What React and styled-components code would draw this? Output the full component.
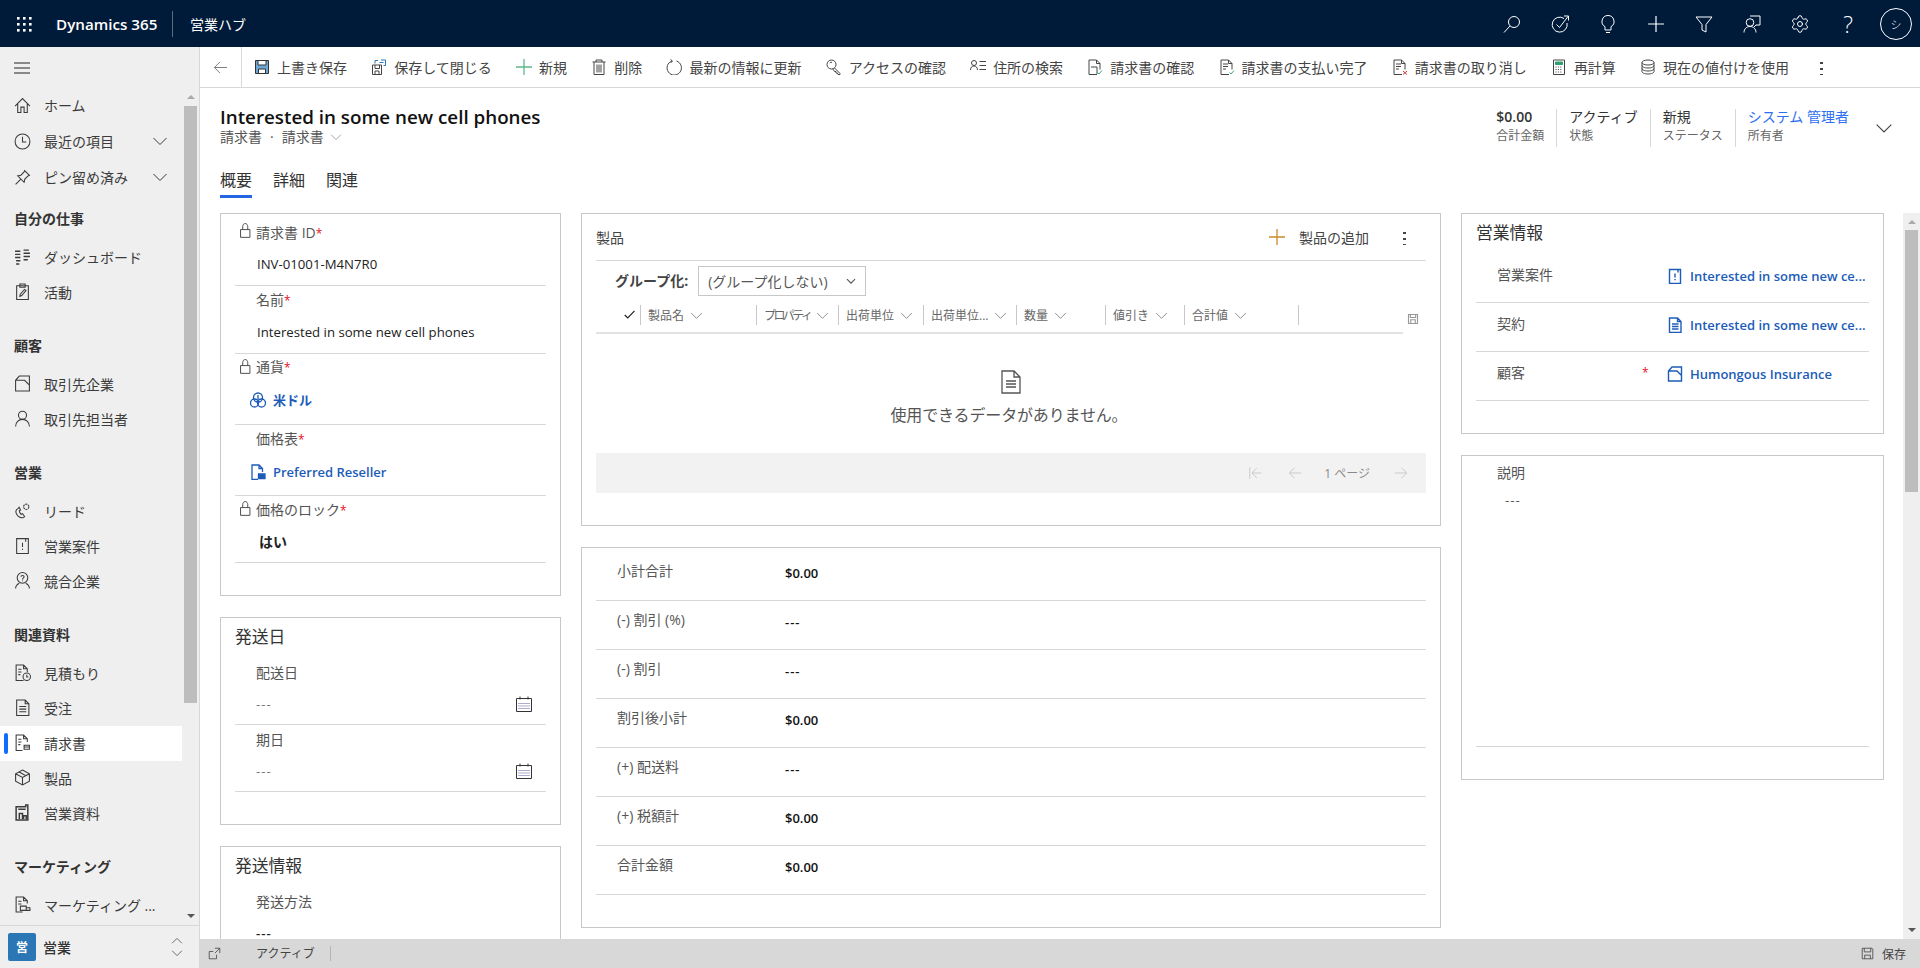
import React from "react";
import styled, { createGlobalStyle } from "styled-components";
import { Settings } from "lucide-react";

const Global = createGlobalStyle`
  html, body { margin: 0; padding: 0; height: 100%; overflow: hidden; }
  body {
    font-family: "Open Sans", "Noto Sans CJK JP", sans-serif;
    font-size: 14px;
    color: #333;
    background: #fff;
  }
  * { box-sizing: border-box; }
`;

const paths = {
  home: <path d="M1 8.500 8 1.500l7 7M3.500 6.500v8h3v-5h3v5h3v-8" />,
  clock: <><circle cx="8" cy="8" r="7" /><path d="M8 3.500v5h3.500" /></>,
  pin: <path d="M10 1.500 14.500 6l-1.300.5-3 3-.7 3-6-6 3-.7 3-3ZM6.200 9.800 1.500 14.500" />,
  dash: <path strokeWidth="1.400" d="M1 3h5M1 6h5M1 9h5M2 12h4M2 15h3M9 2h5M9 5h6M9 8h6M9 11h4" />,
  activity: <path d="M2.500 2.500h11v13h-11ZM5.500 4V1h5v3ZM5.500 12.500l.4-2 4-4.500 1.400 1.200-4 4.600Z" />,
  account: <path d="M1.500 15V5L5 1h9.500v14ZM1.500 5h8.500l4.500 4.500" />,
  contact: <><circle cx="8" cy="5" r="3.800" /><path d="M1.500 15.500c0-4 2.800-6.700 6.500-6.700s6.500 2.700 6.500 6.700" /></>,
  lead: <><circle cx="11.500" cy="4.500" r="2.500" strokeDasharray="2 .6" /><path d="M4 6C2 7 1 9 2.500 11.500S7 15.500 9 14.500l1-.8-2-2.700-1.300.6C5.800 10.800 5 9.500 5 8.300l1.200-.8L4.800 5Z" /></>,
  opp: <path d="M2.500 1.500h11v14h-11ZM11 1.500v3M8 5.500v4M8 11v1.200" />,
  comp: <><circle cx="8" cy="5.500" r="5" /><path d="M6.500 4.500C6.500 2.800 9.500 2.800 9.500 4.500 9.500 5.700 8 5.700 8 7M8 8v.8M1.500 15.500c0-2.500 1.500-4 3.500-5M14.500 15.500c0-2.500-1.500-4-3.500-5" /></>,
  quote: <><path d="M9 15.500H2V1h7l3.500 3.500v3M9 1v3.500h3.500M4 5h3M4 7.500h3M4 10h2" /><circle cx="12" cy="12" r="3.500" /><path d="M12 10v2.200h1.500" /></>,
  order: <path d="M2.500 1h8l3.500 3.500v11H2.500ZM10.500 1v3.500H14M5 7h6.500M5 9.500h6.500M5 12h6.500" />,
  invoice: <><path d="M8 15.500H2V1h7l3.500 3.500v3M9 1v3.500h3.500M4 5h3M4 7.500h3M4 10h2" /><path d="M9.500 10.500h5v1.800h-5ZM9.500 12.300h5v2h-5Z" /></>,
  product: <path d="M8 1 14.500 4.500v7L8 15l-6.500-3.500v-7ZM1.500 4.500 8 8l6.500-3.500M8 8v7M4.800 2.800l6.500 3.500" />,
  lit: <path strokeWidth="1.400" d="M2 2.500h9V1h2v14H2ZM4 5h7M5 14V9h3v5M9 14v-3h2.500v3" />,
  mkt: <><path d="M8 15H2V1h7l3.500 3.500V7M9 1v3.500h3.500M4 5h3M4 7.500h3" /><path d="M6 9.500h5.500v4H6ZM11.500 11H15v2.500h-3.500M8 15.200h.1M13 15.200h.1" /></>,
  lock: <path d="M2.700 7h10v8.300h-10ZM5 7V4C5 1.800 6.200.6 7.700.6S10.400 1.800 10.400 4v3" />,
  back: <path d="M15 8H1.500M7.500 2 1.500 8l6 6" />,
  fwd: <path d="M1 8h13.500M8.500 2l6 6-6 6" />,
  first: <path d="M2 1.500v13M15 8H4.500M10 2.500 4.500 8l5.500 5.500" />,
  chev: <path d="M1.500 5 8 11.500 14.500 5" />,
  chevUp: <path d="M1.500 11 8 4.500 14.500 11" />,
  closeSave: <><path d="M1.500 6h9v9.500h-9ZM4 6v3.500h4.500V6M4 15.500V12h4v3.500" /><path stroke="#2b76b4" d="M7 1.500H4v3M10 1h4.500v5.500h-2M8.500 3.500h4" /></>,
  trash: <path d="M1.500 3h13M5 3V1h6v2M3 3v12.500h10V3M6 5.500v8M8 5.500v8M10 5.500v8" />,
  refresh: <path d="M4.500.5 6.500 2 4.500 4M6 2a7.200 7.200 0 1 0 4.500 0" />,
  key: <><circle cx="5.500" cy="5.500" r="4.500" /><path d="M3.800 3.800a2 2 0 0 1 2.200-.4M8.500 9l5.500 5.500v1h-2l-.5-1.500h-1.500v-1.500H8.500L6.800 10" /></>,
  addr: <><circle cx="4" cy="4" r="2.500" /><path d="M.5 11c0-2.500 1.500-4 3.500-4s3.500 1.500 3.500 4M9.500 2.500H16M9.500 6.500H16M9.500 10.500H16" /></>,
  check: <path d="M1 8l4 4 9-9.500" />,
  db: <><ellipse cx="8" cy="3.500" rx="6" ry="2.500" /><path d="M2 3.500v9c0 1.400 2.700 2.500 6 2.500s6-1.100 6-2.500v-9M2 6.500C2 8 4.700 9 8 9s6-1 6-2.500M2 9.500c0 1.500 2.700 2.500 6 2.500s6-1 6-2.500" /></>,
  cal: <><path d="M.5 2.500h15v13H.5ZM4 .5v3M12 .5v3" /><path strokeDasharray="1 1" d="M2.500 7.500h11M2.500 10h11M2.500 12.500h11" stroke="#5a5a9a" /></>,
  gridSave: <path strokeWidth="1.500" d="M2 2h12v12H2ZM4.500 2v4h7V2M5 14v-5h6v5" />,
  menu: <path d="M0 3h16M0 8h16M0 13h16" />,
  expand: <path d="M1.500 5.500v9h9M1.500 5.500h5M10.500 14.500v-5M8.500 1.500h6v6M14.500 1.500l-6 6" />,
  save: <path d="M1.500 1.500h12l1 1v12h-13ZM4 1.500V6h8V1.500M4.500 14.500V10h7v4.500" />,
};

const Glyph = styled.svg`
  width: ${(p) => p.$size || 16}px;
  height: ${(p) => p.$size || 16}px;
  flex: none;
  fill: none;
  stroke: ${(p) => p.$color || "currentColor"};
  stroke-width: ${(p) => p.$weight || 1};
  display: block;
`;

const Ico = ({ name, size, color, weight }) => (
  <Glyph viewBox="0 0 16 16" $size={size} $color={color} $weight={weight}>
    {paths[name]}
  </Glyph>
);

/* top bar */
const TopBar = styled.header`
  height: 47px;
  background: #001a39;
  color: #fff;
  display: flex;
  align-items: center;
`;
const Waffle = styled.div`
  width: 56px;
  padding-left: 16px;
  flex: none;
`;
const Brand = styled.div`
  font-size: 15.2px;
  font-weight: 600;
  width: 117px;
  height: 26px;
  line-height: 26px;
  border-right: 1px solid #5a6b82;
  flex: none;
`;
const AppName = styled.div`
  font-size: 14px;
  margin-left: 17px;
`;
const TopIcons = styled.div`
  margin-left: auto;
  display: flex;
  align-items: center;
`;
const TopBtn = styled.div`
  width: 48px;
  height: 47px;
  display: flex;
  align-items: center;
  justify-content: center;
  font-size: 23px;
  font-weight: 300;
`;
const Avatar = styled.div`
  width: 32px;
  height: 32px;
  border-radius: 50%;
  border: 1px solid #fff;
  font-size: 11px;
  display: flex;
  align-items: center;
  justify-content: center;
`;

/* sidebar */
const Shell = styled.div`
  height: 921px;
  display: flex;
`;
const Sidebar = styled.aside`
  width: 200px;
  flex: none;
  background: #efefef;
  border-right: 1px solid #d8d8d8;
  display: flex;
  flex-direction: column;
`;
const Burger = styled.div`
  height: 41px;
  padding-left: 14px;
  display: flex;
  align-items: center;
  color: #222;
`;
const NavWrap = styled.div`
  flex: 1;
  min-height: 0;
  display: flex;
`;
const NavList = styled.nav`
  width: 182px;
  overflow: hidden;
`;
const NavHead = styled.div`
  height: 42px;
  margin-top: ${(p) => p.$top ?? 15}px;
  padding-left: 14px;
  line-height: 41px;
  font-weight: 700;
  color: #333;
  font-size: 14px;
`;
const NavRow = styled.div`
  position: relative;
  height: ${(p) => p.$h || 35}px;
  display: flex;
  align-items: center;
  padding: 0 14px 2px;
  gap: 13px;
  color: #3b3b3b;
  background: ${(p) => (p.$active ? "#fff" : "transparent")};
  white-space: nowrap;
  ${(p) =>
    p.$active &&
    `&::before {
      content: "";
      position: absolute;
      left: 4px;
      top: 7px;
      width: 4px;
      height: 21px;
      border-radius: 2px;
      background: #0f6cff;
    }`}
`;
const NavChevron = styled.span`
  margin-left: auto;
`;
const Track = styled.div`
  width: ${(p) => p.$w}px;
  margin-left: ${(p) => p.$ml || 0}px;
  background: ${(p) => p.$bg || "transparent"};
  flex: none;
  display: flex;
  flex-direction: column;
  align-items: center;
`;
const Arrow = styled.div`
  height: ${(p) => p.$h}px;
  flex: none;
  display: flex;
  align-items: center;
  &::after {
    content: "";
    border-left: 4px solid transparent;
    border-right: 4px solid transparent;
    ${(p) => (p.$down ? "border-top: 4px solid #555;" : "border-bottom: 4px solid #aaa;")}
  }
`;
const Thumb = styled.div`
  width: 13px;
  height: ${(p) => p.$h}px;
  background: #bdbdbd;
  flex: none;
  margin-bottom: auto;
`;
const Switcher = styled.div`
  height: 43px;
  border-top: 1px solid #d8d8d8;
  display: flex;
  align-items: center;
  padding-left: 8px;
  color: #333;
`;
const Tile = styled.div`
  width: 28px;
  height: 28px;
  border-radius: 2px;
  background: #2b76b4;
  color: #fff;
  font-size: 12px;
  font-weight: 700;
  display: flex;
  align-items: center;
  justify-content: center;
`;
const SwitchName = styled.div`
  margin-left: 7px;
  font-weight: 500;
`;
const UpDown = styled.div`
  margin-left: auto;
  margin-right: 16px;
  display: flex;
  flex-direction: column;
  gap: 0;
  color: #444;
`;

/* main */
const Main = styled.main`
  flex: 1;
  min-width: 0;
  display: flex;
  flex-direction: column;
`;
const Toolbar = styled.div`
  height: 41px;
  flex: none;
  border-bottom: 1px solid #d8d8d8;
  display: flex;
  align-items: stretch;
  white-space: nowrap;
  color: #444;
`;
const BackBtn = styled.div`
  width: 42px;
  border-right: 1px solid #d8d8d8;
  display: flex;
  align-items: center;
  justify-content: center;
  color: #777;
`;
const Cmd = styled.div`
  display: flex;
  align-items: center;
  gap: 7px;
  padding: 0 12.1px;
`;
const More = styled.div`
  width: 3px;
  height: 15px;
  margin-left: 19px;
  align-self: center;
  background: radial-gradient(circle at center, #444 1.2px, transparent 1.4px) 0 0 / 3px 6px;
`;
const FormHead = styled.div`
  flex: none;
  height: 125px;
  display: flex;
  justify-content: space-between;
  padding: 17px 28px 0 20px;
`;
const Title = styled.h1`
  margin: 0;
  font-size: 18.8px;
  line-height: 24px;
  font-weight: 600;
  color: #111;
`;
const Crumb = styled.div`
  display: flex;
  align-items: center;
  gap: 6px;
  font-size: 14px;
  line-height: 16px;
  color: #555;
`;
const CrumbDot = styled.span`
  margin: 0 2px;
`;
const Tabs = styled.div`
  display: flex;
  gap: 21px;
  margin-top: 25px;
`;
const Tab = styled.div`
  font-size: 16px;
  line-height: 20px;
  height: 28px;
  padding-bottom: 5px;
  color: #333;
  border-bottom: 3px solid ${(p) => (p.$on ? "#2266e3" : "transparent")};
`;
const Meta = styled.div`
  display: flex;
  align-items: flex-start;
  padding-top: 4px;
`;
const MetaItem = styled.div`
  height: 38px;
  padding: 0 12px;
  border-left: ${(p) => (p.$first ? "none" : "1px solid #d8d8d8")};
`;
const MetaValue = styled.div`
  font-size: 14px;
  line-height: 16px;
  font-weight: ${(p) => (p.$bold ? 600 : 400)};
  color: ${(p) => p.$color || "#333"};
`;
const MetaLabel = styled.div`
  font-size: 12px;
  line-height: 21px;
  color: #666;
`;
const MetaChevron = styled.div`
  margin: 10px -1px 0 14px;
  color: #444;
`;
const Body = styled.div`
  flex: 1;
  min-height: 0;
  display: flex;
  overflow: hidden;
`;
const Columns = styled.div`
  flex: 1;
  min-width: 0;
  padding-left: 20px;
  display: grid;
  grid-template-columns: 341px 860px 423px;
  column-gap: 20px;
  align-items: start;
`;
const Col = styled.div`
  display: flex;
  flex-direction: column;
  gap: 21px;
`;
const Card = styled.section`
  flex: none;
  height: ${(p) => p.$h}px;
  border: 1px solid #c8c8c8;
  padding: 0 14px;
  background: #fff;
`;
const CardTitle = styled.h2`
  margin: 0;
  font-size: 16.8px;
  font-weight: 400;
  height: ${(p) => p.$h || 39}px;
  line-height: ${(p) => (p.$h || 39) - 2}px;
  color: #333;
`;
const Field = styled.div`
  position: relative;
  height: ${(p) => p.$h}px;
  padding: ${(p) => p.$top ?? 5}px 0 0 21px;
  border-bottom: ${(p) => (p.$open ? "none" : "1px solid #d8d8d8")};
`;
const LockMark = styled.span`
  position: absolute;
  left: 3px;
  top: 5px;
  color: #444;
`;
const Label = styled.div`
  line-height: 20px;
  color: #555;
`;
const Req = styled.span`
  color: #e81123;
  font-size: 12px;
`;
const Value = styled.div`
  margin-top: ${(p) => p.$gap ?? 10}px;
  line-height: 20px;
  color: ${(p) => p.$color || "#222"};
  font-weight: ${(p) => p.$weight || 400};
  font-size: ${(p) => p.$fs || 13.2}px;
  letter-spacing: ${(p) => (p.$dash ? "1px" : "0")};
  display: flex;
  align-items: center;
  justify-content: space-between;
  padding-left: ${(p) => p.$pl ?? 1}px;
`;
const LinkValue = styled.div`
  margin: ${(p) => p.$gap ?? 12}px 0 0 -6px;
  line-height: 20px;
  display: flex;
  align-items: center;
  gap: 7px;
  color: #1c5cb8;
  font-weight: 600;
  font-size: 13px;
  white-space: nowrap;
`;
const CalBtn = styled.span`
  margin-right: 14px;
  color: #333;
`;
const CardPadded = styled.div`
  padding-top: 4px;
`;

/* products grid */
const GridTitle = styled.div`
  height: 47px;
  display: flex;
  align-items: center;
  border-bottom: 1px solid #d8d8d8;
  color: #444;
`;
const AddBtn = styled.div`
  margin-left: auto;
  display: flex;
  align-items: center;
  gap: 14px;
`;
const Dots = styled(More)`
  margin: 0 20px 0 20px;
`;
const GroupRow = styled.div`
  height: 39px;
  padding-left: 19px;
  display: flex;
  align-items: center;
  gap: 10px;
`;
const GroupLabel = styled.div`
  font-weight: 700;
  color: #444;
  margin-top: -2px;
`;
const Select = styled.div`
  width: 168px;
  height: 30px;
  border: 1px solid #c8c8c8;
  padding: 0 9px 0 9px;
  display: flex;
  align-items: center;
  justify-content: space-between;
  color: #555;
`;
const HeadWrap = styled.div`
  display: flex;
`;
const GridHead = styled.div`
  width: 807px;
  flex: none;
  display: flex;
  padding: 5px 0 7px;
  border-bottom: 2px solid #e2e2e2;
`;
const CheckCell = styled.div`
  width: 44px;
  display: flex;
  align-items: center;
  justify-content: flex-end;
  padding-right: 4px;
  color: #222;
`;
const HeadCell = styled.div`
  width: ${(p) => p.$w}px;
  height: 20px;
  border-left: 1px solid #c8c8c8;
  padding: 0 9px 0 7px;
  display: flex;
  align-items: center;
  justify-content: ${(p) => (p.$spread ? "space-between" : "flex-start")};
  gap: 6px;
  font-size: 12px;
  letter-spacing: ${(p) => (p.$tight ? "-2.6px" : "0")};
  color: #666;
  white-space: nowrap;
`;
const ColSave = styled.div`
  margin: 13px 0 0 4px;
  color: #999;
`;
const Empty = styled.div`
  height: 119px;
  padding-top: 36px;
  display: flex;
  flex-direction: column;
  align-items: center;
  color: #555;
`;
const EmptyText = styled.div`
  margin: 10px 4px 0 0;
  font-size: 16px;
  line-height: 22px;
  letter-spacing: -0.15px;
`;
const Pager = styled.div`
  height: 40px;
  background: #f2f2f2;
  display: flex;
  align-items: center;
  justify-content: flex-end;
  padding-right: 18px;
  color: #c4c4c4;
`;
const PageNum = styled.span`
  font-size: 12px;
  color: #8a8a8a;
  margin: 0 24px 0 22px;
`;
const PagerGap = styled.span`
  width: 26px;
`;

/* summary */
const SumRows = styled.div`
  padding-top: 4px;
`;
const SumRow = styled.div`
  height: 49px;
  border-bottom: 1px solid #d8d8d8;
  display: flex;
  padding-left: 21px;
`;
const SumLabel = styled.div`
  width: 168px;
  padding-top: 9px;
  line-height: 20px;
  color: #555;
`;
const SumValue = styled.div`
  padding-top: 11px;
  line-height: 20px;
  font-size: 13px;
  font-weight: 600;
  letter-spacing: ${(p) => (p.$dash ? "1px" : "0")};
  color: #111;
`;

/* right side */
const InfoRow = styled.div`
  height: 49px;
  border-bottom: 1px solid #d8d8d8;
  display: flex;
  align-items: center;
  padding: 0 0 7px 21px;
  white-space: nowrap;
`;
const InfoLabel = styled.div`
  width: 145px;
  margin-top: -2px;
  color: #555;
`;
const InfoReq = styled.div`
  width: 25px;
  color: #e81123;
  font-size: 12px;
`;
const InfoValue = styled.div`
  display: flex;
  align-items: center;
  gap: 7px;
  margin-top: 2px;
  color: #1c5cb8;
  font-weight: 600;
  font-size: 13px;
`;
const NoteBlock = styled.div`
  height: 291px;
  padding: 7px 0 0 21px;
  border-bottom: 1px solid #d8d8d8;
`;

/* status bar */
const Status = styled.footer`
  height: 29px;
  flex: none;
  background: #d8d8d8;
  display: flex;
  align-items: center;
  font-size: 12px;
  color: #444;
  padding: 0 14px 0 8px;
`;
const StatusText = styled.div`
  margin-left: 35px;
  padding-right: 15px;
  height: 15px;
  line-height: 15px;
  border-right: 1px solid #b4b4b4;
`;
const StatusSave = styled.div`
  margin-left: auto;
  display: flex;
  align-items: center;
  gap: 8px;
`;

const nav = [
  { head: "自分の仕事", top: 2, rows: [["dash", "ダッシュボード"], ["activity", "活動"]] },
  { head: "顧客", rows: [["account", "取引先企業"], ["contact", "取引先担当者"]] },
  { head: "営業", rows: [["lead", "リード"], ["opp", "営業案件"], ["comp", "競合企業"]] },
  {
    head: "関連資料",
    rows: [["quote", "見積もり"], ["order", "受注"], ["invoice", "請求書", true], ["product", "製品"], ["lit", "営業資料"]],
  },
  { head: "マーケティング", rows: [["mkt", "マーケティング ..."]] },
];

const commands = [
  ["save", "上書き保存", "#2b6ea8"],
  ["closeSave", "保存して閉じる"],
  ["plus", "新規", "#5fb88a"],
  ["trash", "削除"],
  ["refresh", "最新の情報に更新"],
  ["key", "アクセスの確認"],
  ["addr", "住所の検索"],
  ["docBox", "請求書の確認"],
  ["docOk", "請求書の支払い完了"],
  ["docX", "請求書の取り消し"],
  ["calc", "再計算"],
  ["db", "現在の値付けを使用"],
];

const columns = [
  ["製品名", 116],
  ["プロパティ", 82, false, true],
  ["出荷単位", 85],
  ["出荷単位...", 93, true],
  ["数量", 89],
  ["値引き", 79],
  ["合計値", 114],
];

const summary = [
  ["小計合計", "$0.00"],
  ["(-) 割引 (%)", "---"],
  ["(-) 割引", "---"],
  ["割引後小計", "$0.00"],
  ["(+) 配送料", "---"],
  ["(+) 税額計", "$0.00"],
  ["合計金額", "$0.00"],
];

const Calc = () => (
  <Glyph viewBox="0 0 16 16">
    <path d="M2.500 1h11v14.500h-11Z" />
    <path d="M4.500 3h7v2.500h-7Z" fill="#2f9e6e" stroke="#2f9e6e" />
    <path strokeDasharray="1 1.400" d="M4.500 8h7M4.500 10.500h7M4.500 13h7" />
  </Glyph>
);

const Plus = ({ color, size = 16 }) => (
  <Glyph viewBox="0 0 16 16" $size={size} $color={color} $weight={1.300}>
    <path d="M8 0v16M0 8h16" />
  </Glyph>
);

const DocStatus = ({ kind }) => (
  <Glyph viewBox="0 0 16 16">
    <path d="M10 15.500H2V1h7.500L13 4.500v6M9.500 1v3.500H13" />
    {kind === "box" ? <path d="M4 8h6v7" /> : <path d="M4 5h5M4 7.500h5M4 10h3" />}
    {kind === "x" ? (
      <path stroke="#d13438" d="M11 12l4 3.500M15 12l-4 3.500" />
    ) : (
      <path stroke="#3aa76d" d="M10.500 13.500l1.500 1.500 3-3.500" />
    )}
  </Glyph>
);

const SaveIcon = () => (
  <Glyph viewBox="0 0 16 16" $color="#333">
    <path d="M1.500 1.500h13v13h-13Z" fill="#6ea6d6" />
    <path d="M4 1.500V6h8V1.500Z" fill="#fff" />
    <path d="M4.500 14.500V10h7v4.500Z" fill="#fff" />
  </Glyph>
);

const cmdIcon = ([name, , color]) => {
  if (name === "save") return <SaveIcon />;
  if (name === "plus") return <Plus color={color} />;
  if (name === "calc") return <Calc />;
  if (name === "docBox") return <DocStatus kind="box" />;
  if (name === "docOk") return <DocStatus />;
  if (name === "docX") return <DocStatus kind="x" />;
  return <Ico name={name} />;
};

const TopIconSet = () => (
  <TopIcons>
    <TopBtn>
      <Glyph viewBox="0 0 20 20" $size={20}>
        <circle cx="12" cy="8" r="5.500" />
        <path d="M8 12 2 18.500" />
      </Glyph>
    </TopBtn>
    <TopBtn>
      <Glyph viewBox="0 0 20 20" $size={20}>
        <path d="M14 4.500A7.500 7.500 0 1 0 17 9M6.500 10.500l3 3L18 2.500M14 2h4.500v4.500" />
      </Glyph>
    </TopBtn>
    <TopBtn>
      <Glyph viewBox="0 0 20 20" $size={20}>
        <path d="M10 1.500a6 6 0 0 0-3 11.200V16h6v-3.300a6 6 0 0 0-3-11.200ZM8 18.500h4" />
      </Glyph>
    </TopBtn>
    <TopBtn>
      <Glyph viewBox="0 0 20 20" $size={20} $weight={1.200}>
        <path d="M10 2v16M2 10h16" />
      </Glyph>
    </TopBtn>
    <TopBtn>
      <Glyph viewBox="0 0 20 20" $size={20}>
        <path d="M2 3h16l-6 7.500V18l-4-2v-5.500Z" />
      </Glyph>
    </TopBtn>
    <TopBtn>
      <Glyph viewBox="0 0 20 20" $size={20}>
        <path d="M8 2h10v9h-4l-2 2" />
        <circle cx="8" cy="8.500" r="3.800" />
        <path d="M2 18.500c0-3.500 2.500-6 6-6s6 2.500 6 6" />
      </Glyph>
    </TopBtn>
    <TopBtn>
      <Settings size={20} strokeWidth={1.200} />
    </TopBtn>
    <TopBtn>?</TopBtn>
    <TopBtn>
      <Avatar>シ</Avatar>
    </TopBtn>
  </TopIcons>
);

const PriceIcon = () => (
  <Glyph viewBox="0 0 16 16" $color="#1c5cb8" $weight={1.300}>
    <path d="M8 15.500H2V1h7l3.500 3.500V8M9 1v3.500h3.500" />
    <path d="M8.500 10h6.500v2H8.500ZM8.500 12h6.500v2.500H8.500Z" fill="#1c5cb8" />
  </Glyph>
);

const CurrencyIcon = () => (
  <Glyph viewBox="0 0 16 16" $color="#1c5cb8" $weight={1.300}>
    <circle cx="8" cy="5.500" r="4.500" />
    <circle cx="4.500" cy="11" r="4" />
    <circle cx="11.500" cy="11" r="4" />
    <path d="M8 3v5" />
  </Glyph>
);

export default function App() {
  return (
    <>
      <Global />
      <TopBar>
        <Waffle>
          <Glyph viewBox="0 0 16 16" $size={16} $color="none">
            {[1, 7, 13].map((y) =>
              [1, 7, 13].map((x) => <rect key={`${x}-${y}`} x={x} y={y} width="2.600" height="2.600" fill="#fff" />)
            )}
          </Glyph>
        </Waffle>
        <Brand>Dynamics 365</Brand>
        <AppName>営業ハブ</AppName>
        <TopIconSet />
      </TopBar>
      <Shell>
        <Sidebar>
          <Burger>
            <Ico name="menu" />
          </Burger>
          <NavWrap>
            <NavList>
              <NavRow $h={36}>
                <Ico name="home" size={17} />
                ホーム
              </NavRow>
              <NavRow $h={36}>
                <Ico name="clock" size={17} />
                最近の項目
                <NavChevron>
                  <Ico name="chev" />
                </NavChevron>
              </NavRow>
              <NavRow $h={36}>
                <Ico name="pin" size={17} />
                ピン留め済み
                <NavChevron>
                  <Ico name="chev" />
                </NavChevron>
              </NavRow>
              {nav.map((group) => (
                <React.Fragment key={group.head}>
                  <NavHead $top={group.top}>{group.head}</NavHead>
                  {group.rows.map(([icon, label, active]) => (
                    <NavRow key={label} $active={active}>
                      <Ico name={icon} size={17} />
                      {label}
                    </NavRow>
                  ))}
                </React.Fragment>
              ))}
            </NavList>
            <Track $w={13} $ml={2}>
              <Arrow $h={18} />
              <Thumb $h={597} />
              <Arrow $h={18} $down />
            </Track>
          </NavWrap>
          <Switcher>
            <Tile>営</Tile>
            <SwitchName>営業</SwitchName>
            <UpDown>
              <Ico name="chevUp" size={12} />
              <Ico name="chev" size={12} />
            </UpDown>
          </Switcher>
        </Sidebar>
        <Main>
          <Toolbar>
            <BackBtn>
              <Ico name="back" size={15} />
            </BackBtn>
            {commands.map((c) => (
              <Cmd key={c[1]}>
                {cmdIcon(c)}
                {c[1]}
              </Cmd>
            ))}
            <More />
          </Toolbar>
          <FormHead>
            <div>
              <Title>Interested in some new cell phones</Title>
              <Crumb>
                請求書
                <CrumbDot>·</CrumbDot>
                請求書
                <Ico name="chev" size={12} color="#888" />
              </Crumb>
              <Tabs>
                <Tab $on>概要</Tab>
                <Tab>詳細</Tab>
                <Tab>関連</Tab>
              </Tabs>
            </div>
            <Meta>
              <MetaItem $first>
                <MetaValue $bold>$0.00</MetaValue>
                <MetaLabel>合計金額</MetaLabel>
              </MetaItem>
              <MetaItem>
                <MetaValue>アクティブ</MetaValue>
                <MetaLabel>状態</MetaLabel>
              </MetaItem>
              <MetaItem>
                <MetaValue>新規</MetaValue>
                <MetaLabel>ステータス</MetaLabel>
              </MetaItem>
              <MetaItem>
                <MetaValue $color="#2e6ff2">システム 管理者</MetaValue>
                <MetaLabel>所有者</MetaLabel>
              </MetaItem>
              <MetaChevron>
                <Ico name="chev" size={18} />
              </MetaChevron>
            </Meta>
          </FormHead>
          <Body>
            <Columns>
              <Col>
                <Card $h={383}>
                  <CardPadded>
                    <Field $h={68}>
                      <LockMark><Ico name="lock" size={15} /></LockMark>
                      <Label>請求書 ID<Req>*</Req></Label>
                      <Value>INV-01001-M4N7R0</Value>
                    </Field>
                    <Field $h={68} $top={4}>
                      <Label>名前<Req>*</Req></Label>
                      <Value $gap={11}>Interested in some new cell phones</Value>
                    </Field>
                    <Field $h={71} $top={3}>
                      <LockMark><Ico name="lock" size={15} /></LockMark>
                      <Label>通貨<Req>*</Req></Label>
                      <LinkValue>
                        <CurrencyIcon />
                        米ドル
                      </LinkValue>
                    </Field>
                    <Field $h={71} $top={4}>
                      <Label>価格表<Req>*</Req></Label>
                      <LinkValue>
                        <PriceIcon />
                        Preferred Reseller
                      </LinkValue>
                    </Field>
                    <Field $h={67} $top={4}>
                      <LockMark><Ico name="lock" size={15} /></LockMark>
                      <Label>価格のロック<Req>*</Req></Label>
                      <Value $weight={700} $fs={14} $pl={3} $gap={11}>はい</Value>
                    </Field>
                  </CardPadded>
                </Card>
                <Card $h={208}>
                  <CardTitle>発送日</CardTitle>
                  <Field $h={68} $top={6}>
                    <Label>配送日</Label>
                    <Value $color="#777" $gap={11} $pl={0} $dash>
                      ---
                      <CalBtn><Ico name="cal" /></CalBtn>
                    </Value>
                  </Field>
                  <Field $h={67}>
                    <Label>期日</Label>
                    <Value $color="#777" $gap={11} $pl={0} $dash>
                      ---
                      <CalBtn><Ico name="cal" /></CalBtn>
                    </Value>
                  </Field>
                </Card>
                <Card $h={200}>
                  <CardTitle>発送情報</CardTitle>
                  <Field $h={67} $open $top={6}>
                    <Label>発送方法</Label>
                    <Value $weight={600} $pl={0} $gap={11} $dash>---</Value>
                  </Field>
                </Card>
              </Col>
              <Col>
                <Card $h={313}>
                  <GridTitle>
                    製品
                    <AddBtn>
                      <Plus color="#c98a2b" />
                      製品の追加
                      <Dots />
                    </AddBtn>
                  </GridTitle>
                  <GroupRow>
                    <GroupLabel>グループ化:</GroupLabel>
                    <Select>
                      (グループ化しない)
                      <Ico name="chev" size={10} weight={1.800} />
                    </Select>
                  </GroupRow>
                  <HeadWrap>
                    <GridHead>
                      <CheckCell>
                        <Ico name="check" size={12} weight={1.600} />
                      </CheckCell>
                      {columns.map(([label, w, spread, tight]) => (
                        <HeadCell key={label} $w={w} $spread={spread} $tight={tight}>
                          {label}
                          <Ico name="chev" size={13} color="#777" />
                        </HeadCell>
                      ))}
                      <HeadCell $w={105} />
                    </GridHead>
                    <ColSave>
                      <Ico name="gridSave" size={12} />
                    </ColSave>
                  </HeadWrap>
                  <Empty>
                    <Glyph viewBox="0 0 24 24" $size={24} $color="#555" $weight={1.300}>
                      <path d="M3 1h12l6 6v16H3ZM15 1v6h6M7 11h10M7 14h10M7 17h10" />
                    </Glyph>
                    <EmptyText>使用できるデータがありません。</EmptyText>
                  </Empty>
                  <Pager>
                    <Ico name="first" size={14} />
                    <PagerGap />
                    <Ico name="back" size={14} />
                    <PageNum>1 ページ</PageNum>
                    <Ico name="fwd" size={14} />
                  </Pager>
                </Card>
                <Card $h={381}>
                  <SumRows>
                    {summary.map(([label, value]) => (
                      <SumRow key={label}>
                        <SumLabel>{label}</SumLabel>
                        <SumValue $dash={value === "---"}>{value}</SumValue>
                      </SumRow>
                    ))}
                  </SumRows>
                </Card>
              </Col>
              <Col>
                <Card $h={221}>
                  <CardTitle $h={40}>営業情報</CardTitle>
                  <InfoRow>
                    <InfoLabel>営業案件</InfoLabel>
                    <InfoReq />
                    <InfoValue>
                      <Ico name="opp" color="#1c5cb8" weight={1.400} />
                      Interested in some new ce...
                    </InfoValue>
                  </InfoRow>
                  <InfoRow>
                    <InfoLabel>契約</InfoLabel>
                    <InfoReq />
                    <InfoValue>
                      <Ico name="order" color="#1c5cb8" weight={1.400} />
                      Interested in some new ce...
                    </InfoValue>
                  </InfoRow>
                  <InfoRow>
                    <InfoLabel>顧客</InfoLabel>
                    <InfoReq>*</InfoReq>
                    <InfoValue>
                      <Ico name="account" color="#1c5cb8" weight={1.400} />
                      Humongous Insurance
                    </InfoValue>
                  </InfoRow>
                </Card>
                <Card $h={325}>
                  <NoteBlock>
                    <Label>説明</Label>
                    <Value $gap={7} $pl={8} $color="#555" $dash>---</Value>
                  </NoteBlock>
                </Card>
              </Col>
            </Columns>
            <Track $w={17} $bg="#efefef">
              <Arrow $h={17} />
              <Thumb $h={262} />
              <Arrow $h={18} $down />
            </Track>
          </Body>
          <Status>
            <Ico name="expand" size={13} />
            <StatusText>アクティブ</StatusText>
            <StatusSave>
              <Ico name="save" size={13} />
              保存
            </StatusSave>
          </Status>
        </Main>
      </Shell>
    </>
  );
}
